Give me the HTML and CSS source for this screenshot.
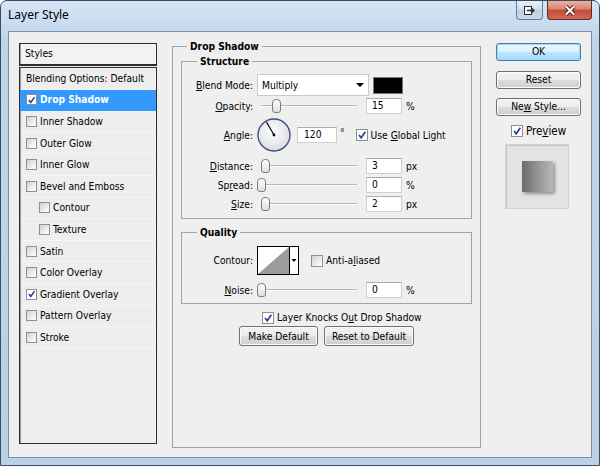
FILE: index.html
```html
<!DOCTYPE html>
<html lang="en">

<head>
    <meta charset="UTF-8">
    <title>Layer Style</title>
    <link rel="stylesheet" href="styles.css">
</head>

<body>
    <div class="window">
        <div class="titlebar">
            <span class="title">Layer Style</span>
            <div class="caption">
                <span class="cap-btn">
                    <svg width="13" height="11" viewBox="0 0 13 11">
                        <rect x="1.5" y="1.5" width="7" height="8" fill="#f4f7fb" stroke="#2b2f36" />
                        <path d="M4 5.5 H11 M9 3.5 L11 5.5 L9 7.5" fill="none" stroke="#2b2f36" stroke-width="1.3" />
                    </svg>
                </span>
                <span class="cap-btn close">
                    <svg width="14" height="11" viewBox="0 0 14 11">
                        <path d="M3 1.5 L11 9.5 M11 1.5 L3 9.5" stroke="#5a1d14" stroke-width="4" />
                        <path d="M3 1.5 L11 9.5 M11 1.5 L3 9.5" stroke="#ffffff" stroke-width="2" />
                    </svg>
                </span>
            </div>
        </div>

        <div class="client">
            <!-- left list -->
            <div class="styles-panel">
                <div class="styles-head">Styles</div>
                <ul class="styles-list">
                    <li class="row">Blending Options: Default</li>
                    <li class="row selected"><span class="cb on"><svg width="10" height="10" viewBox="0 0 10 10"><path d="M2 5 L4.2 7.8 L8.3 1.8" fill="none" stroke="#2c3f9c" stroke-width="1.7" /></svg></span>Drop Shadow</li>
                    <li class="row"><span class="cb"></span>Inner Shadow</li>
                    <li class="row"><span class="cb"></span>Outer Glow</li>
                    <li class="row"><span class="cb"></span>Inner Glow</li>
                    <li class="row"><span class="cb"></span>Bevel and Emboss</li>
                    <li class="row sub"><span class="cb"></span>Contour</li>
                    <li class="row sub"><span class="cb"></span>Texture</li>
                    <li class="row"><span class="cb"></span>Satin</li>
                    <li class="row"><span class="cb"></span>Color Overlay</li>
                    <li class="row"><span class="cb on"><svg width="10" height="10" viewBox="0 0 10 10"><path d="M2 5 L4.2 7.8 L8.3 1.8" fill="none" stroke="#2c3f9c" stroke-width="1.7" /></svg></span>Gradient Overlay</li>
                    <li class="row"><span class="cb"></span>Pattern Overlay</li>
                    <li class="row"><span class="cb"></span>Stroke</li>
                </ul>
            </div>

            <!-- middle settings -->
            <fieldset class="group main">
                <legend>Drop Shadow</legend>

                <fieldset class="group sub-group">
                    <legend>Structure</legend>

                    <div class="field blend-row">
                        <span class="label"><u>B</u>lend Mode:</span>
                        <div class="select">Multiply<span class="arrow"></span></div>
                        <span class="swatch"></span>
                    </div>

                    <div class="field opacity-row">
                        <span class="label"><u>O</u>pacity:</span>
                        <div class="slider"><span class="thumb" style="left: 15px"></span></div>
                        <span class="num">15</span>
                        <span class="unit">%</span>
                    </div>

                    <div class="field angle-row">
                        <span class="label"><u>A</u>ngle:</span>
                        <svg class="dial" width="34" height="34" viewBox="0 0 34 34">
                            <defs>
                                <radialGradient id="dialFill" cx="45%" cy="40%" r="60%">
                                    <stop offset="0" stop-color="#ffffff" />
                                    <stop offset="1" stop-color="#dcdde2" />
                                </radialGradient>
                            </defs>
                            <circle cx="17" cy="17" r="16" fill="url(#dialFill)" stroke="#3e4f7e" stroke-width="1.4" />
                            <line x1="17" y1="17" x2="9.5" y2="4" stroke="#111" stroke-width="1.3" />
                            <circle cx="17" cy="17" r="1.4" fill="#111" />
                        </svg>
                        <span class="num wide">120</span>
                        <span class="deg">°</span>
                        <span class="cb on global"><svg width="10" height="10" viewBox="0 0 10 10"><path d="M2 5 L4.2 7.8 L8.3 1.8" fill="none" stroke="#2c3f9c" stroke-width="1.7" /></svg></span>
                        <span>Use <u>G</u>lobal Light</span>
                    </div>

                    <div class="field distance-row">
                        <span class="label"><u>D</u>istance:</span>
                        <div class="slider"><span class="thumb" style="left: 4px"></span></div>
                        <span class="num">3</span>
                        <span class="unit">px</span>
                    </div>

                    <div class="field small-row">
                        <span class="label">Sp<u>r</u>ead:</span>
                        <div class="slider"><span class="thumb" style="left: 0px"></span></div>
                        <span class="num">0</span>
                        <span class="unit">%</span>
                    </div>

                    <div class="field small-row">
                        <span class="label"><u>S</u>ize:</span>
                        <div class="slider"><span class="thumb" style="left: 4px"></span></div>
                        <span class="num">2</span>
                        <span class="unit">px</span>
                    </div>
                </fieldset>

                <fieldset class="group sub-group quality">
                    <legend>Quality</legend>

                    <div class="field contour-row">
                        <span class="label">Contour:</span>
                        <svg class="contour" width="42" height="29" viewBox="0 0 42 29">
                            <rect x="0.5" y="0.5" width="41" height="28" fill="#fff" stroke="#000" />
                            <polygon points="1,28 32,1 32,28" fill="#9b9b9b" />
                            <line x1="32.5" y1="0" x2="32.5" y2="29" stroke="#000" />
                            <polygon points="34.5,13 39.5,13 37,16" fill="#000" />
                        </svg>
                        <span class="cb aa"></span>
                        <span>Anti-a<u>l</u>iased</span>
                    </div>

                    <div class="field noise-row">
                        <span class="label"><u>N</u>oise:</span>
                        <div class="slider"><span class="thumb" style="left: 0px"></span></div>
                        <span class="num">0</span>
                        <span class="unit">%</span>
                    </div>
                </fieldset>

                <div class="knockout">
                    <span class="cb on"><svg width="10" height="10" viewBox="0 0 10 10"><path d="M2 5 L4.2 7.8 L8.3 1.8" fill="none" stroke="#2c3f9c" stroke-width="1.7" /></svg></span>
                    <span>Layer Knocks O<u>u</u>t Drop Shadow</span>
                </div>

                <div class="defaults">
                    <button class="btn make">Make Default</button>
                    <button class="btn reset-def">Reset to Default</button>
                </div>
            </fieldset>

            <!-- right column -->
            <div class="side">
                <button class="btn side-btn ok">OK</button>
                <button class="btn side-btn">Reset</button>
                <button class="btn side-btn">Ne<u>w</u> Style...</button>
                <div class="preview-row">
                    <span class="cb on"><svg width="10" height="10" viewBox="0 0 10 10"><path d="M2 5 L4.2 7.8 L8.3 1.8" fill="none" stroke="#2c3f9c" stroke-width="1.7" /></svg></span>
                    <span>Pre<u>v</u>iew</span>
                </div>
                <div class="preview">
                    <span class="preview-box"></span>
                </div>
            </div>
        </div>
    </div>
</body>

</html>
```

FILE: styles.css
```css
* {
    box-sizing: border-box;
}

body {
    margin: 0;
    font-family: "DejaVu Sans Condensed", "DejaVu Sans", sans-serif;
    font-size: 10.2px;
    color: #000;
    background: #fff;
}

.window {
    width: 600px;
    height: 466px;
    border: 1px solid #3f4a58;
    border-radius: 7px 7px 0 0;
    background: linear-gradient(#d6e5f5, #bed4ec 40px, #bad1ea);
    padding: 0 7px 7px;
    display: flex;
    flex-direction: column;
}

.titlebar {
    height: 30px;
    display: flex;
    justify-content: space-between;
    align-items: flex-start;
}

.title {
    font-family: "Noto Sans", sans-serif;
    font-size: 12px;
    line-height: 16px;
    padding-top: 6px;
}

.caption {
    display: flex;
    gap: 4px;
}

.cap-btn {
    width: 27px;
    height: 19px;
    border: 1px solid #6b7b8f;
    border-top: none;
    border-radius: 0 0 4px 4px;
    background: linear-gradient(#e6eef7, #d2dfee 45%, #bccfe4 50%, #cbdaeb);
    display: flex;
    align-items: center;
    justify-content: center;
}

.cap-btn.close {
    width: 45px;
    border-color: #5e2a24;
    background: linear-gradient(#eab0a2, #d98672 45%, #c24d37 50%, #cf6a55);
}

.client {
    flex: 1;
    background: #efefef;
    border: 1px solid #7f8fa3;
    display: grid;
    grid-template-columns: 138px 309px 85px;
    column-gap: 15px;
    padding: 11px 10px 13px 10px;
}

/* styles list */
.styles-panel {
    display: flex;
    flex-direction: column;
}

.styles-head {
    height: 23px;
    border: 1px solid #2e2e2e;
    border-bottom-width: 2px;
    box-shadow: inset 1px 0 0 #9a9a9a;
    padding-left: 5px;
    line-height: 20px;
    margin-bottom: 1px;
    background: #f2f2f2;
}

.styles-list {
    flex: 1;
    margin: 0;
    padding: 0;
    list-style: none;
    border: 1px solid #2e2e2e;
    box-shadow: inset 1px 0 0 #9a9a9a;
    background: #eeeeee;
}

.row {
    height: 21.6px;
    display: flex;
    align-items: center;
    gap: 3px;
    padding-left: 5px;
    border-bottom: 1px dotted #ffffff;
    margin: 0 1px;
}

.row.sub {
    padding-left: 18px;
}

.row.selected {
    background: #3399ff;
    color: #fff;
    font-weight: bold;
    margin: 0;
    padding-left: 6px;
    border-bottom-color: #3399ff;
}

.cb {
    width: 12px;
    height: 12px;
    flex: none;
    border: 1px solid #8e8f8f;
    background: linear-gradient(135deg, #cfcfcf, #f4f4f4 70%, #ffffff);
    display: inline-flex;
    align-items: center;
    justify-content: center;
}

.row .cb {
    width: 11px;
    height: 11px;
}

.cb.on {
    background: #fff;
}

/* group boxes */
.group {
    margin: 0;
    border: 1px solid #a3a3a3;
    min-width: 0;
}

.group legend {
    font-weight: bold;
    line-height: 13px;
    padding: 0 3px;
}

.main {
    margin: -3px 0 -4px;
    padding: 2px 8px 0;
}

.main>legend {
    margin-left: 6px;
}

.sub-group {
    padding: 0 0 6px;
}

.sub-group>legend {
    margin-left: 15px;
}

.quality {
    margin-top: 7px;
    padding-bottom: 5px;
}

.field {
    display: flex;
    align-items: center;
    height: 16px;
    margin-top: 3px;
}

.field .label {
    width: 71px;
    margin-right: 4px;
    text-align: right;
    flex: none;
}

.blend-row {
    height: 22px;
    margin-top: 6px;
}

.opacity-row {
    margin-top: 2px;
}

.angle-row {
    height: 34px;
    margin-top: 4px;
}

.distance-row {
    margin-top: 6px;
}

.contour-row {
    height: 29px;
    margin-top: 7px;
}

.noise-row {
    margin-top: 7px;
}

.select {
    width: 112px;
    height: 22px;
    background: #fff;
    border: 1px solid #c9c9c9;
    display: flex;
    align-items: center;
    justify-content: space-between;
    padding: 0 4px 0 4px;
}

.arrow {
    width: 0;
    height: 0;
    border-left: 4px solid transparent;
    border-right: 4px solid transparent;
    border-top: 4px solid #000;
}

.swatch {
    width: 30px;
    height: 17px;
    margin-left: 4px;
    background: #000;
    border: 1px solid #777;
}

.slider {
    position: relative;
    width: 104px;
    height: 16px;
    flex: none;
}

.slider::before {
    content: "";
    position: absolute;
    left: 4px;
    right: 4px;
    top: 7px;
    border-top: 1px solid #b7b7b7;
    border-bottom: 1px solid #ffffff;
}

.thumb {
    position: absolute;
    top: 1px;
    width: 9px;
    height: 14px;
    border: 1px solid #7d7d7d;
    border-radius: 4px 4px 3px 3px;
    background: linear-gradient(#ffffff, #dedede);
}

.num {
    width: 36px;
    height: 16px;
    margin-left: 5px;
    background: #fff;
    border: 1px solid #cfcfcf;
    border-top-color: #ababab;
    padding-left: 5px;
    line-height: 14px;
}

.num.wide {
    width: 40px;
    margin-left: 6px;
    padding-left: 6px;
}

.unit {
    margin-left: 4px;
}

.deg {
    margin-left: 3px;
    align-self: flex-start;
    margin-top: 9px;
}

.cb.global {
    margin-left: 11px;
    margin-right: 3px;
}

.cb.aa {
    margin-left: 12px;
    margin-right: 3px;
}

.knockout {
    display: flex;
    align-items: center;
    gap: 3px;
    height: 15px;
    margin-top: 6px;
    padding-left: 81px;
}

.defaults {
    display: flex;
    justify-content: center;
    gap: 6px;
    margin-top: 1px;
}

.btn {
    font: inherit;
    color: #000;
    height: 20px;
    padding: 0;
    border: 1px solid #707070;
    border-radius: 3px;
    background: linear-gradient(#f3f3f3, #ebebeb 50%, #dddddd 51%, #cfcfcf);
    box-shadow: inset 0 0 0 1px #fbfbfb;
}

.make {
    width: 79px;
}

.reset-def {
    width: 90px;
}

/* right column */
.side {
    display: flex;
    flex-direction: column;
}

.side-btn {
    width: 85px;
    height: 18px;
    line-height: 14px;
    margin-bottom: 9px;
}

.side-btn.ok {
    border-color: #3c7fb1;
    background: linear-gradient(#eaf6fd, #d9f0fc 50%, #bee6fd 51%, #a7d9f5);
    box-shadow: inset 0 0 0 1px #9fd9f7;
    margin-bottom: 10px;
}

.preview-row {
    display: flex;
    align-items: center;
    justify-content: center;
    gap: 3px;
    height: 13px;
    margin-top: -1px;
    font-size: 11.5px;
}

.preview {
    width: 64px;
    height: 65px;
    margin: 7px 0 0 9px;
    background: #e3e3e3;
    border: 1px solid #d3d3d3;
    box-shadow: inset 1px 1px 0 #c6c6c6;
    display: flex;
    align-items: center;
    justify-content: center;
}

.preview-box {
    width: 31px;
    height: 31px;
    background: linear-gradient(to right, #6a6a6a, #8c8c8c 40%, #b9b9b9);
    box-shadow: 2px 2px 3px rgba(0, 0, 0, 0.35);
}
```
